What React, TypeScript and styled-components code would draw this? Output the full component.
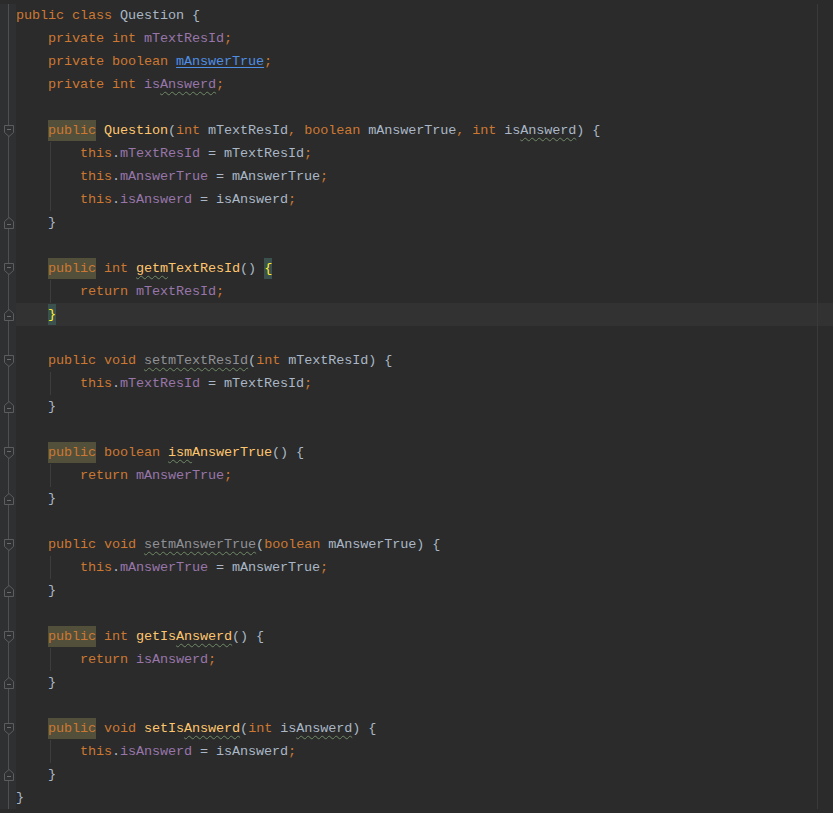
import styled, { createGlobalStyle } from "styled-components";

type Kind = "plain" | "kw" | "field" | "fn" | "unused" | "link" | "punct" | "match";

type Tok = { t: string; k?: Kind; typo?: boolean; warn?: boolean };

type Line = {
  indent: number;
  toks: Tok[];
  fold?: "start" | "end";
  guide?: boolean;
  current?: boolean;
};

const GlobalStyle = createGlobalStyle`
  html, body {
    margin: 0;
    padding: 0;
    background: #2b2b2b;
  }
`;

const colors: Record<Kind, string> = {
  plain: "#a9b7c6",
  kw: "#cc7832",
  field: "#9876aa",
  fn: "#ffc66d",
  unused: "#8f9196",
  link: "#4f8fe6",
  punct: "#cc7832",
  match: "#ffef28",
};

// tiny helpers so the line table below stays readable
const p = (t: string): Tok => ({ t });
const kw = (t: string): Tok => ({ t, k: "kw" });
const f = (t: string, typo = false): Tok => ({ t, k: "field", typo });
const fn = (t: string, typo = false): Tok => ({ t, k: "fn", typo });
const un = (t: string): Tok => ({ t, k: "unused", typo: true });
const ty = (t: string): Tok => ({ t, typo: true });
const semi: Tok = { t: ";", k: "punct" };
const comma: Tok = { t: ",", k: "punct" };
const pub = (warn: boolean): Tok => ({ t: "public", k: "kw", warn });

const blank: Line = { indent: 0, toks: [] };

const lines: Line[] = [
  { indent: 0, toks: [kw("public"), p(" "), kw("class"), p(" Question {")] },
  { indent: 4, toks: [kw("private"), p(" "), kw("int"), p(" "), f("mTextResId"), semi] },
  { indent: 4, toks: [kw("private"), p(" "), kw("boolean"), p(" "), { t: "mAnswerTrue", k: "link" }, semi] },
  { indent: 4, toks: [kw("private"), p(" "), kw("int"), p(" "), f("is"), f("Answerd", true), semi] },
  blank,
  {
    indent: 4,
    fold: "start",
    toks: [
      pub(true), p(" "), fn("Question"), p("("), kw("int"), p(" mTextResId"), comma, p(" "),
      kw("boolean"), p(" mAnswerTrue"), comma, p(" "), kw("int"), p(" is"), ty("Answerd"), p(") {"),
    ],
  },
  { indent: 8, guide: true, toks: [kw("this"), p("."), f("mTextResId"), p(" = mTextResId"), semi] },
  { indent: 8, guide: true, toks: [kw("this"), p("."), f("mAnswerTrue"), p(" = mAnswerTrue"), semi] },
  { indent: 8, guide: true, toks: [kw("this"), p("."), f("isAnswerd"), p(" = isAnswerd"), semi] },
  { indent: 4, fold: "end", toks: [p("}")] },
  blank,
  {
    indent: 4,
    fold: "start",
    toks: [pub(true), p(" "), kw("int"), p(" "), fn("getm", true), fn("TextResId"), p("() "), { t: "{", k: "match" }],
  },
  { indent: 8, guide: true, toks: [kw("return"), p(" "), f("mTextResId"), semi] },
  { indent: 4, fold: "end", current: true, toks: [{ t: "}", k: "match" }] },
  blank,
  {
    indent: 4,
    fold: "start",
    toks: [pub(false), p(" "), kw("void"), p(" "), un("setmTextResId"), p("("), kw("int"), p(" mTextResId) {")],
  },
  { indent: 8, guide: true, toks: [kw("this"), p("."), f("mTextResId"), p(" = mTextResId"), semi] },
  { indent: 4, fold: "end", toks: [p("}")] },
  blank,
  {
    indent: 4,
    fold: "start",
    toks: [pub(true), p(" "), kw("boolean"), p(" "), fn("ism", true), fn("AnswerTrue"), p("() {")],
  },
  { indent: 8, guide: true, toks: [kw("return"), p(" "), f("mAnswerTrue"), semi] },
  { indent: 4, fold: "end", toks: [p("}")] },
  blank,
  {
    indent: 4,
    fold: "start",
    toks: [pub(false), p(" "), kw("void"), p(" "), un("setmAnswerTrue"), p("("), kw("boolean"), p(" mAnswerTrue) {")],
  },
  { indent: 8, guide: true, toks: [kw("this"), p("."), f("mAnswerTrue"), p(" = mAnswerTrue"), semi] },
  { indent: 4, fold: "end", toks: [p("}")] },
  blank,
  {
    indent: 4,
    fold: "start",
    toks: [pub(true), p(" "), kw("int"), p(" "), fn("getIs"), fn("Answerd", true), p("() {")],
  },
  { indent: 8, guide: true, toks: [kw("return"), p(" "), f("isAnswerd"), semi] },
  { indent: 4, fold: "end", toks: [p("}")] },
  blank,
  {
    indent: 4,
    fold: "start",
    toks: [
      pub(true), p(" "), kw("void"), p(" "), fn("setIs"), fn("Answerd", true), p("("), kw("int"),
      p(" is"), ty("Answerd"), p(") {"),
    ],
  },
  { indent: 8, guide: true, toks: [kw("this"), p("."), f("isAnswerd"), p(" = isAnswerd"), semi] },
  { indent: 4, fold: "end", toks: [p("}")] },
  { indent: 0, toks: [p("}")] },
];

const Editor = styled.div`
  min-height: 813px;
  padding-top: 4px;
  box-sizing: border-box;
  background: #2b2b2b;
  font-family: "Liberation Mono", "DejaVu Sans Mono", monospace;
  font-size: 13.5px;
  letter-spacing: -0.1px;
  color: #a9b7c6;
  display: flex;
  flex-direction: column;
`;

const Row = styled.div`
  display: flex;
  height: 23px;
  line-height: 23px;
`;

const Gutter = styled.div`
  flex: none;
  width: 16px;
  display: flex;
  align-items: center;
  justify-content: center;
  background:
    linear-gradient(#4e4f51, #4e4f51) 8px 0 / 1px 100% no-repeat,
    #2f3031;
`;

const Code = styled.div<{ $guide?: boolean; $current?: boolean }>`
  flex: 1;
  white-space: pre;
  background-color: ${(p) => (p.$current ? "#323232" : "transparent")};
  background-image: ${(p) => (p.$guide ? "linear-gradient(#3d3d3d, #3d3d3d)," : "")}
    linear-gradient(#3a3a3a, #3a3a3a);
  background-position: ${(p) => (p.$guide ? "34px 0," : "")} 801px 0;
  background-size: ${(p) => (p.$guide ? "1px 100%," : "")} 1px 100%;
  background-repeat: no-repeat;
`;

const Token = styled.span<{ $k: Kind; $typo?: boolean; $warn?: boolean }>`
  color: ${(p) => colors[p.$k]};
  ${(p) =>
    p.$k === "link" &&
    `text-decoration: underline; text-decoration-color: #4f8fe6; text-underline-offset: 2px;`}
  ${(p) =>
    p.$typo &&
    `text-decoration: underline wavy #6f8a67; text-decoration-thickness: 1px; text-underline-offset: 3px;`}
  ${(p) =>
    (p.$warn || p.$k === "match") &&
    `display: inline-block;
     background: linear-gradient(${p.$warn ? "#52503a" : "#3b514d"}, ${p.$warn ? "#52503a" : "#3b514d"}) 0 1px / 100% 21px no-repeat;`}
`;

function FoldMark({ dir }: { dir: "start" | "end" }) {
  const body =
    dir === "start"
      ? "M2.5 1.5 H11.5 V8.5 L7 12.5 L2.5 8.5 Z"
      : "M2.5 12.5 H11.5 V5.5 L7 1.5 L2.5 5.5 Z";
  const dash = dir === "start" ? "M5 5.5 H9" : "M5 8.5 H9";
  return (
    <svg width="14" height="14" viewBox="0 0 14 14" style={{ marginLeft: 2 }}>
      <path d={body} fill="#2f3031" stroke="#5c5d5f" strokeWidth="1" />
      <path d={dash} stroke="#6a6b6d" strokeWidth="1" />
    </svg>
  );
}

export default function App() {
  return (
    <>
      <GlobalStyle />
      <Editor>
        {lines.map((line, i) => (
          <Row key={i}>
            <Gutter>{line.fold && <FoldMark dir={line.fold} />}</Gutter>
            <Code $guide={line.guide} $current={line.current}>
              {" ".repeat(line.indent)}
              {line.toks.map((tok, j) => (
                <Token key={j} $k={tok.k ?? "plain"} $typo={tok.typo} $warn={tok.warn}>
                  {tok.t}
                </Token>
              ))}
            </Code>
          </Row>
        ))}
      </Editor>
    </>
  );
}
